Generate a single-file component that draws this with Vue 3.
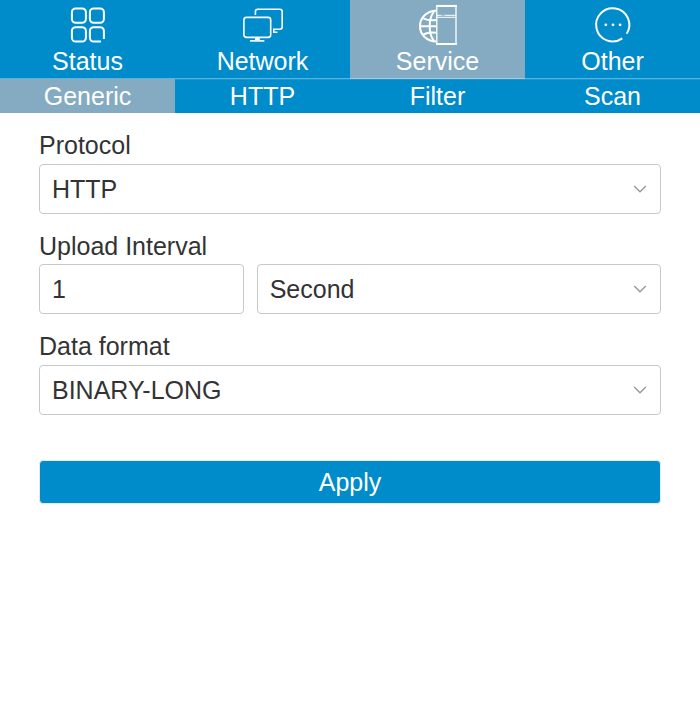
<script setup>
import { ref } from 'vue'

const tabs = ['Status', 'Network', 'Service', 'Other']
const subTabs = ['Generic', 'HTTP', 'Filter', 'Scan']
const activeTab = ref('Service')
const activeSub = ref('Generic')
const interval = ref('1')
</script>

<template>
  <div class="page">
    <nav class="tabs">
      <div
        v-for="tab in tabs"
        :key="tab"
        class="tab"
        :class="{ active: tab === activeTab }"
        @click="activeTab = tab"
      >
        <svg v-if="tab === 'Status'" class="icon" viewBox="-5 0 65 50">
          <g class="stroke">
            <rect x="11.9" y="8.4" width="14" height="14.4" rx="3.8" />
            <rect x="29.9" y="8.4" width="14" height="14.4" rx="3.8" />
            <rect x="11.9" y="27.2" width="14" height="14.4" rx="3.8" />
            <path d="M41 41.6h-7.3a3.8 3.8 0 0 1-3.8-3.8V31a3.8 3.8 0 0 1 3.8-3.8h6.4a3.8 3.8 0 0 1 3.8 3.8v8" />
          </g>
        </svg>
        <svg v-else-if="tab === 'Network'" class="icon" viewBox="-5 0 65 50">
          <g class="stroke thin">
            <path d="M20.4 15V11.6a2.4 2.4 0 0 1 2.4-2.4h22a2.4 2.4 0 0 1 2.4 2.4v15.2a2.4 2.4 0 0 1-2.4 2.4H38.8v3h3.7" />
            <rect x="8.9" y="17.4" width="26.8" height="20" rx="2.6" />
            <path d="M15 40.9h14.4" />
          </g>
          <path class="solid" d="M20 37.4h4.8v2.8H20z" />
        </svg>
        <svg v-else-if="tab === 'Service'" class="icon" viewBox="-5 0 65 50">
          <g class="stroke">
            <path d="M26 10.8C17 11 10 17.5 10 26.2S17 41.4 26 41.6" />
            <path d="M24 11.5C18.2 19 18.2 33.5 24 41" />
            <path d="M13.2 18.3Q19 21 26 20M10 26.3H26M13.2 34.5Q19 31.5 26 32.8" />
          </g>
          <rect class="door" x="26.8" y="5.6" width="19.2" height="38.4" />
          <path class="caps" d="M26 6H46.8M26 44H46.8" />
          <path class="shelf" d="M27 15.3H31.5M32.5 15.3H33.5M34.5 15.3H46M27 17.3H46" />
        </svg>
        <svg v-else class="icon" viewBox="-5 0 65 50">
          <path class="stroke" d="M37.3 38.4A16.6 16.6 0 1 1 41.7 33.8" />
          <g class="solid">
            <circle cx="20.8" cy="24.8" r="1.4" />
            <circle cx="28" cy="24.8" r="1.4" />
            <circle cx="35.1" cy="24.8" r="1.4" />
          </g>
        </svg>
        <span class="tab-label">{{ tab }}</span>
      </div>
    </nav>

    <nav class="subtabs">
      <div
        v-for="tab in subTabs"
        :key="tab"
        class="subtab"
        :class="{ active: tab === activeSub }"
        @click="activeSub = tab"
      >{{ tab }}</div>
    </nav>

    <main class="form">
      <section class="field">
        <label class="label">Protocol</label>
        <div class="control">
          <span>HTTP</span>
          <svg class="chevron" viewBox="0 0 14 10"><path d="M1.2 2L7 7.8 12.8 2" /></svg>
        </div>
      </section>
      <section class="field interval">
        <label class="label">Upload Interval</label>
        <div class="pair">
          <input v-model="interval" class="control" type="text" />
          <div class="control">
            <span>Second</span>
            <svg class="chevron" viewBox="0 0 14 10"><path d="M1.2 2L7 7.8 12.8 2" /></svg>
          </div>
        </div>
      </section>
      <section class="field">
        <label class="label">Data format</label>
        <div class="control">
          <span>BINARY-LONG</span>
          <svg class="chevron" viewBox="0 0 14 10"><path d="M1.2 2L7 7.8 12.8 2" /></svg>
        </div>
      </section>
      <button class="apply">Apply</button>
    </main>
  </div>
</template>

<style>
body {
  background: #fff;
}
</style>

<style scoped>
.page {
  font-family: "Liberation Sans", Arial, sans-serif;
  font-size: 25px;
  color: #333;
}
.tabs,
.subtabs {
  display: grid;
  grid-template-columns: repeat(4, 1fr);
  background: #008bcb;
  color: #fff;
}
.tabs {
  height: 79px;
}
.tab {
  display: flex;
  flex-direction: column;
  align-items: center;
  box-sizing: border-box;
  border-bottom: 1px solid rgba(255, 255, 255, 0.35);
}
.active {
  background: #84abc2;
}
.icon {
  display: block;
  width: 65px;
  height: 50px;
  flex: none;
}
.tab-label {
  line-height: 22px;
}
.stroke {
  fill: none;
  stroke: #fff;
  stroke-width: 2;
}
.thin {
  stroke-width: 1.6;
}
.solid {
  fill: #fff;
}
.door {
  fill: #84abc2;
  stroke: #fff;
  stroke-width: 1.3;
}
.caps {
  stroke: #fff;
  stroke-width: 2;
}
.shelf {
  stroke: #fff;
  stroke-width: 1;
}
.subtabs {
  height: 34px;
}
.subtab {
  line-height: 34px;
  text-align: center;
}
.subtab:not(.active) {
  box-shadow: inset 0 1px rgba(255, 255, 255, 0.1);
}
.form {
  display: flex;
  flex-direction: column;
  padding: 18px 39px 0;
}
.field {
  margin-bottom: 17px;
}
.field.interval {
  margin-bottom: 18px;
}
.label {
  display: block;
  height: 33px;
  line-height: 29px;
}
.interval .label {
  line-height: 31px;
}
.control {
  display: flex;
  align-items: center;
  justify-content: space-between;
  box-sizing: border-box;
  width: 100%;
  height: 50px;
  margin: 0;
  padding: 0 12px;
  border: 1px solid #c8c9cb;
  border-radius: 4px;
  background: #fff;
  color: #333;
  font: inherit;
}
.pair {
  display: grid;
  grid-template-columns: 204.7px 1fr;
  gap: 13px;
}
.chevron {
  width: 14px;
  height: 10px;
  margin-right: 1px;
  fill: none;
  stroke: #96969a;
  stroke-width: 1.3;
}
.apply {
  height: 44px;
  margin-top: 28px;
  padding: 0;
  border: 1px solid #e4eaf2;
  border-radius: 4px;
  background: #008bcb;
  color: #fff;
  font: inherit;
}
</style>
